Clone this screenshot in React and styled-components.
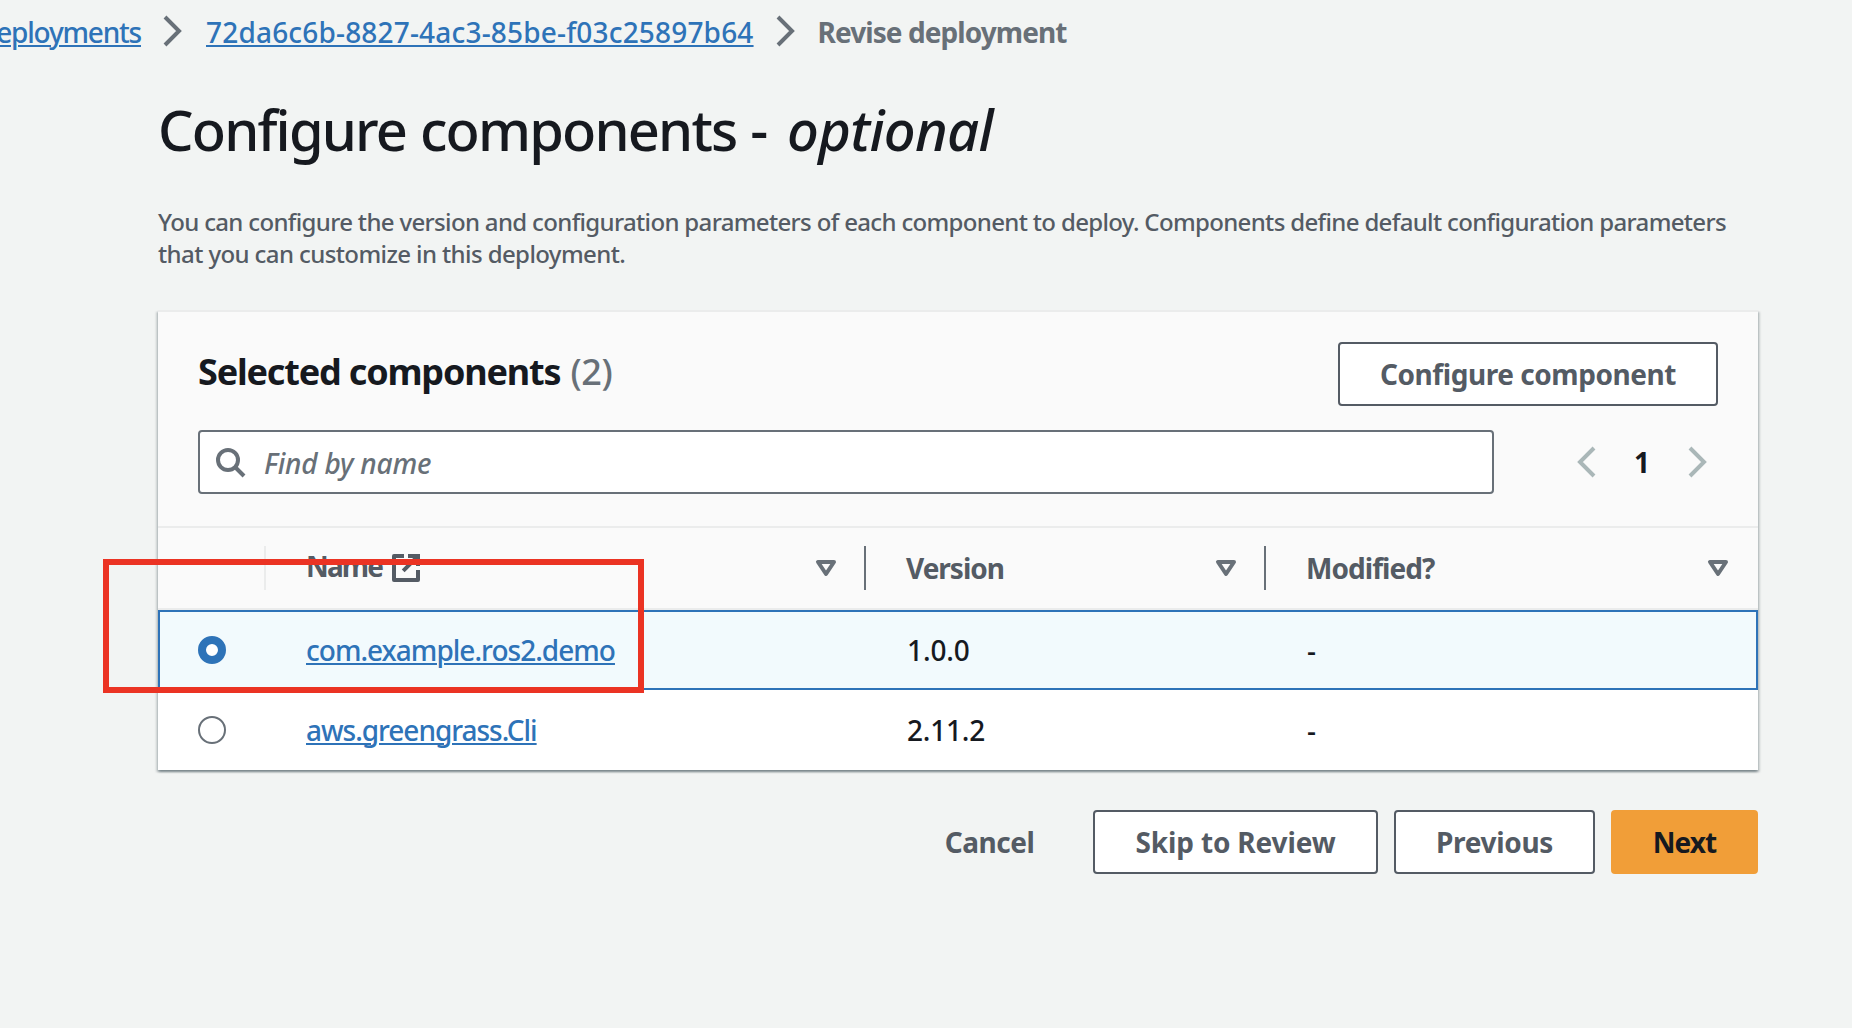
import React, { useState } from "react";
import styled, { createGlobalStyle, css } from "styled-components";

const color = {
  page: "#f2f4f3",
  text: "#16191f",
  muted: "#545b64",
  soft: "#687078",
  link: "#2e73b8",
  line: "#ebecec",
  disabled: "#aab7b8",
};

const GlobalStyle = createGlobalStyle`
  * { box-sizing: border-box; }
  body {
    margin: 0;
    background: ${color.page};
    color: ${color.text};
    font: 500 28px/44px "Noto Sans", "Open Sans", sans-serif;
    overflow: hidden;
  }
`;

const Page = styled.div`
  position: relative;
  width: 1852px;
  height: 1028px;
  overflow: hidden;
  padding-top: 9px;
`;

const Link = styled.a`
  color: ${color.link};
  letter-spacing: ${(p) => p.$track || 0}px;
  text-decoration: underline;
  text-decoration-thickness: 2px;
  text-underline-offset: 2px;
`;

const Breadcrumbs = styled.nav`
  display: flex;
  align-items: center;
  gap: 16px;
  height: 44px;
  white-space: nowrap;

  > ${Link} {
    padding: 2px 0 0 1px;
  }
`;

const CrumbStart = styled.span`
  display: flex;
  justify-content: flex-end;
  width: 141px;
  padding-top: 2px;
`;

const Current = styled.span`
  padding-top: 2px;
  color: ${color.soft};
  font-weight: 700;
  letter-spacing: -0.93px;
`;

const Svg = styled.svg`
  display: block;
  flex: none;
  width: 32px;
  height: 32px;
  fill: none;
  stroke: ${(p) => p.$stroke || color.soft};
  stroke-width: 2;
`;

const Content = styled.main`
  width: 1600px;
  margin: 40px 0 0 158px;
`;

const Title = styled.h1`
  margin: 0;
  font-size: 56px;
  line-height: 72px;
  font-weight: 500;
  letter-spacing: -1.82px;
  word-spacing: 1px;
  white-space: nowrap;

  em {
    margin-left: 7px;
    letter-spacing: -0.7px;
  }
`;

const Description = styled.p`
  margin: 41px 0 40px;
  color: ${color.muted};
  font-size: 24px;
  line-height: 32px;
  letter-spacing: -0.6px;
  white-space: nowrap;

  &::first-line {
    letter-spacing: -0.66px;
  }
`;

const Card = styled.section`
  background: #fff;
  border-top: 2px solid ${color.line};
  box-shadow: 0 2px 2px 0 rgba(0, 28, 36, 0.3), 2px 2px 2px 0 rgba(0, 28, 36, 0.15),
    -2px 2px 2px 0 rgba(0, 28, 36, 0.15);
`;

const CardHeader = styled.header`
  display: flex;
  flex-direction: column;
  gap: 24px;
  padding: 30px 40px 32px;
  background: #fafafa;
  border-bottom: 2px solid ${color.line};
`;

const HeaderRow = styled.div`
  display: flex;
  align-items: center;
  justify-content: space-between;
  height: 64px;
`;

const CardTitle = styled.h2`
  margin: 0;
  padding-bottom: 4px;
  font-size: 36px;
  font-weight: 700;
  letter-spacing: -1.18px;
`;

const Counter = styled.span`
  margin-left: 2px;
  color: ${color.soft};
  font-weight: 500;
  letter-spacing: -0.4px;
`;

const Button = styled.button`
  display: flex;
  align-items: center;
  justify-content: center;
  width: ${(p) => p.$width}px;
  height: 64px;
  padding: 0;
  border: 2px solid ${color.muted};
  border-radius: 4px;
  background: #fff;
  color: ${color.muted};
  font: inherit;
  font-weight: 700;
  letter-spacing: ${(p) => p.$track || 0}px;
  white-space: nowrap;

  ${(p) =>
    p.$kind === "primary" &&
    css`
      border-color: #f19e38;
      background: #f19e38;
      color: ${color.text};
    `}
  ${(p) =>
    p.$kind === "plain" &&
    css`
      border-color: transparent;
      background: transparent;
    `}
`;

const Search = styled.label`
  display: flex;
  align-items: center;
  gap: 18px;
  width: 1296px;
  height: 64px;
  padding-left: 14px;
  border: 2px solid ${color.soft};
  border-radius: 4px;
  background: #fff;
`;

const SearchInput = styled.input`
  flex: 1;
  padding: 1px 0 0;
  border: 0;
  outline: 0;
  background: transparent;
  font: inherit;
  letter-spacing: -0.2px;

  &::placeholder {
    color: ${color.soft};
    font-style: italic;
    opacity: 1;
  }
`;

const Pagination = styled.div`
  display: flex;
  align-items: center;
  justify-content: space-between;
  width: 142px;
  margin-right: 4px;
`;

const PageNumber = styled.span`
  padding-right: 2px;
  font-weight: 700;
`;

const columns = css`
  display: grid;
  grid-template-columns: 108px 600px 400px 492px;
`;

const TableHead = styled.div`
  ${columns}
  height: 82px;
  background: #fafafa;
  border-bottom: 2px solid ${color.line};
`;

const HeadCell = styled.div`
  display: flex;
  align-items: center;
  justify-content: space-between;
  height: 44px;
  margin-top: 18px;
  padding: 0 24px 0 40px;
  border-right: 2px solid ${(p) => p.$line || "transparent"};
  color: ${color.muted};
  font-weight: 700;
  letter-spacing: ${(p) => p.$track || 0}px;

  &:not(:last-child) {
    padding-right: 22px;
  }
  &:last-child {
    border-right: 0;
  }
`;

const HeadLabel = styled.span`
  display: flex;
  align-items: center;
  gap: 8px;
`;

const IconLabel = styled.span`
  margin-top: -5px;
  letter-spacing: -1.85px;
`;

const Row = styled.div`
  ${columns}
  align-items: center;
  height: 80px;
  background: ${(p) => (p.$selected ? "#f2fafd" : "#fff")};
  box-shadow: ${(p) => (p.$selected ? `inset 0 0 0 2px ${color.link}` : "none")};
`;

const Cell = styled.div`
  padding: 0 40px 1px;
  letter-spacing: ${(p) => p.$track || 0}px;

  & + & {
    padding-left: 41px;
  }
`;

const Radio = styled.input`
  appearance: none;
  display: block;
  width: 28px;
  height: 28px;
  margin: 0 0 0 40px;
  border: 2px solid ${color.soft};
  border-radius: 50%;
  background: #fff;

  &:checked {
    border: 8px solid ${color.link};
  }
`;

const Actions = styled.footer`
  display: flex;
  justify-content: flex-end;
  gap: 16px;
  margin-top: 40px;
`;

/* Marker drawn over the selected row */
const Highlight = styled.div`
  position: absolute;
  left: 103px;
  top: 559px;
  width: 541px;
  height: 134px;
  border: 6px solid #eb3323;
  pointer-events: none;
`;

const Chevron = ({ left, stroke }) => (
  <Svg viewBox="0 0 16 16" $stroke={stroke}>
    <path d={left ? "M11 1 4 8l7 7" : "m4 1 7 7-7 7"} />
  </Svg>
);

const SearchIcon = () => (
  <Svg viewBox="0 0 16 16">
    <circle cx="7" cy="7" r="5" />
    <path d="m15 15-4.5-4.5" />
  </Svg>
);

const SortIcon = () => (
  <Svg viewBox="0 0 16 16">
    <path d="M4 5h8l-4 6-4-6z" strokeLinejoin="round" />
  </Svg>
);

const ExternalIcon = () => (
  <Svg viewBox="0 0 16 16" $stroke={color.muted}>
    <path d="M7 2H2v12h12V9" strokeLinejoin="round" />
    <path d="M9 2h5v5M14 2 6.6 9.4" />
  </Svg>
);

const components = [
  { name: "com.example.ros2.demo", version: "1.0.0", modified: "-", nameTrack: -0.98, versionTrack: -0.1 },
  { name: "aws.greengrass.Cli", version: "2.11.2", modified: "-", nameTrack: -1.03, versionTrack: -0.2 },
];

export default function App() {
  const [selected, setSelected] = useState(0);
  return (
    <Page>
      <GlobalStyle />
      <Breadcrumbs>
        <CrumbStart>
          <Link $track={-1.2}>eployments</Link>
        </CrumbStart>
        <Chevron />
        <Link $track={0.18}>72da6c6b-8827-4ac3-85be-f03c25897b64</Link>
        <Chevron />
        <Current>Revise deployment</Current>
      </Breadcrumbs>

      <Content>
        <Title>
          Configure components - <em>optional</em>
        </Title>
        <Description>
          You can configure the version and configuration parameters of each component to deploy. Components define
          default configuration parameters
          <br />
          that you can customize in this deployment.
        </Description>

        <Card>
          <CardHeader>
            <HeaderRow>
              <CardTitle>
                Selected components <Counter>(2)</Counter>
              </CardTitle>
              <Button $width={380} $track={-0.45}>
                Configure component
              </Button>
            </HeaderRow>
            <HeaderRow>
              <Search>
                <SearchIcon />
                <SearchInput placeholder="Find by name" />
              </Search>
              <Pagination>
                <Chevron left stroke={color.disabled} />
                <PageNumber>1</PageNumber>
                <Chevron stroke={color.disabled} />
              </Pagination>
            </HeaderRow>
          </CardHeader>

          <TableHead>
            <HeadCell $line={color.line} />
            <HeadCell $line={color.soft}>
              <HeadLabel>
                <IconLabel>Name</IconLabel>
                <ExternalIcon />
              </HeadLabel>
              <SortIcon />
            </HeadCell>
            <HeadCell $line={color.soft} $track={-1}>
              <HeadLabel>Version</HeadLabel>
              <SortIcon />
            </HeadCell>
            <HeadCell $track={-0.95}>
              <HeadLabel>Modified?</HeadLabel>
              <SortIcon />
            </HeadCell>
          </TableHead>
          {components.map((c, i) => (
            <Row key={c.name} $selected={selected === i}>
              <Radio type="radio" name="component" checked={selected === i} onChange={() => setSelected(i)} />
              <Cell>
                <Link $track={c.nameTrack}>{c.name}</Link>
              </Cell>
              <Cell $track={c.versionTrack}>{c.version}</Cell>
              <Cell>{c.modified}</Cell>
            </Row>
          ))}
        </Card>

        <Actions>
          <Button $kind="plain" $width={175} $track={-0.5}>
            Cancel
          </Button>
          <Button $width={285} $track={-0.15}>
            Skip to Review
          </Button>
          <Button $width={201} $track={-0.3}>
            Previous
          </Button>
          <Button $kind="primary" $width={147} $track={-0.9}>
            Next
          </Button>
        </Actions>
      </Content>
      <Highlight />
    </Page>
  );
}
